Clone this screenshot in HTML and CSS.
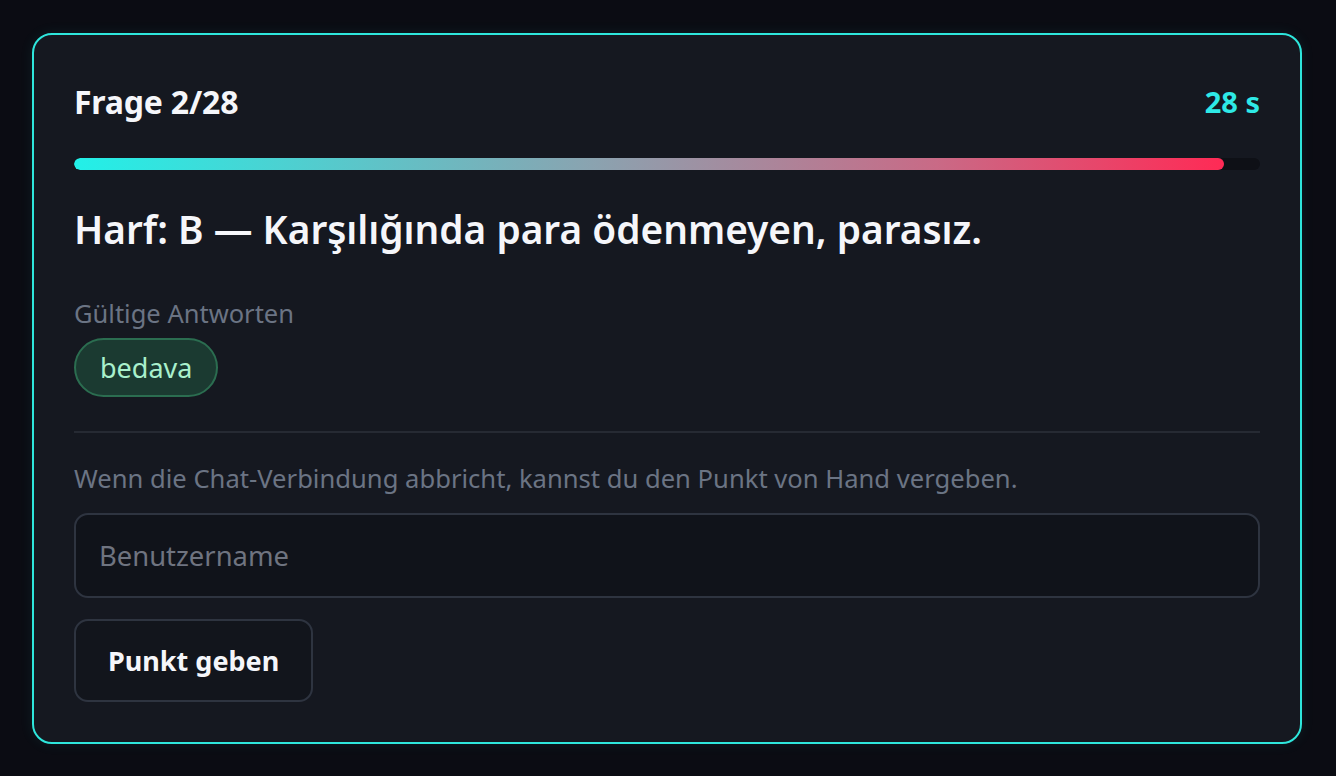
FILE: index.html
```html
<!DOCTYPE html>
<html lang="de">
<head>
<meta charset="utf-8">
<title>Frage</title>
<link rel="stylesheet" href="styles.css">
</head>
<body>
<main class="card">
  <header class="head">
    <h1 class="count">Frage 2/28</h1>
    <span class="timer">28 s</span>
  </header>
  <div class="track"><div class="fill" style="width:97%"></div></div>
  <h2 class="question">Harf: B — Karşılığında para ödenmeyen, parasız.</h2>
  <div class="answers">
    <div class="label">Gültige Antworten</div>
    <div class="chips"><span class="chip">bedava</span></div>
  </div>
  <hr class="divider">
  <p class="note">Wenn die Chat-Verbindung abbricht, kannst du den Punkt von Hand vergeben.</p>
  <input class="field" type="text" placeholder="Benutzername">
  <div><button class="btn" type="button">Punkt geben</button></div>
</main>
</body>
</html>
```
FILE: styles.css
```css
* { box-sizing: border-box; }
html, body { height: 100%; }
body {
  margin: 0;
  background: #0b0c13;
  font-family: "Noto Sans", "Open Sans", sans-serif;
  color: #f3f4f6;
  padding: 33px 34px 0 32px;
}
.card {
  background: #151820;
  border: 2px solid #2ee6dc;
  border-radius: 20px;
  padding: 40px;
  display: flex;
  flex-direction: column;
  box-shadow: 0 0 14px rgba(46, 230, 220, 0.08);
}
.head {
  display: flex;
  justify-content: space-between;
  align-items: center;
  height: 52px;
}
.count {
  margin: 0;
  font-size: 32px;
  font-weight: 700;
  color: #f5f6fa;
  letter-spacing: -0.2px;
}
.timer {
  font-size: 29px;
  font-weight: 700;
  color: #2ee9e6;
}
.track {
  margin-top: 31px;
  height: 12px;
  border-radius: 6px;
  background: #0e1016;
  overflow: hidden;
}
.fill {
  height: 100%;
  border-radius: 6px;
  background: linear-gradient(90deg, #22f0e8 0%, #8aa3b0 45%, #c96a86 75%, #ff2a55 100%);
}
.question {
  margin: 34px 0 0;
  font-size: 38.8px;
  font-weight: 600;
  color: #f5f6fa;
  line-height: 51px;
}
.answers { margin-top: 40px; }
.label {
  font-size: 25.5px;
  color: #6b7484;
  line-height: 36px;
}
.chips { margin-top: 7px; display: flex; gap: 10px; }
.chip {
  display: inline-flex;
  align-items: center;
  height: 59px;
  padding: 0 24px;
  border-radius: 30px;
  background: #1b3a31;
  border: 2px solid #2b6d50;
  color: #a9f0cc;
  font-size: 27px;
}
.divider {
  margin: 34px 0 0;
  border: 0;
  border-top: 2px solid #262a33;
}
.note {
  margin: 28px 0 0;
  font-size: 25.6px;
  color: #6b7484;
  line-height: 36px;
}
.field {
  margin-top: 16px;
  height: 85px;
  width: 100%;
  border-radius: 14px;
  border: 2px solid #2e3440;
  background: #10131a;
  padding: 0 23px;
  font-family: inherit;
  font-size: 27.4px;
  color: #e5e7eb;
}
.field::placeholder { color: #6f7480; }
.btn {
  margin-top: 21px;
  height: 83px;
  padding: 0 32px;
  border-radius: 14px;
  border: 2px solid #2e3440;
  background: #12151c;
  color: #f5f6fa;
  font-family: inherit;
  font-size: 27px;
  font-weight: 700;
}
```
